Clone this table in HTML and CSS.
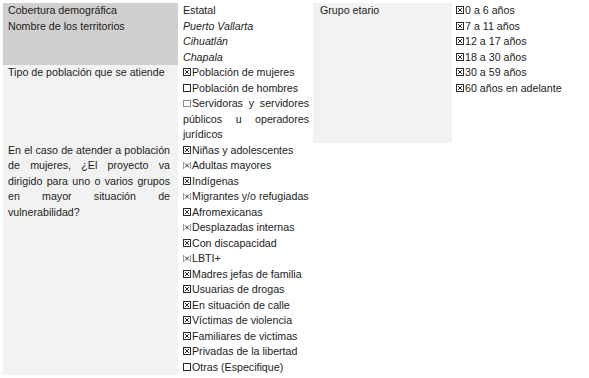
FILE: index.html
```html
<!DOCTYPE html>
<html lang="es">
<head>
<meta charset="utf-8">
<title>Cobertura demográfica</title>
<link rel="stylesheet" href="styles.css">
</head>
<body>
<svg width="0" height="0" class="defs">
  <defs>
    <symbol id="chk" viewBox="0 0 9 9">
      <rect x="0.5" y="0.5" width="7" height="7" fill="none" stroke="#2a2a2a" stroke-width="1"/>
      <path d="M2 2 L6 6 M6 2 L2 6" stroke="#2a2a2a" stroke-width="1" fill="none"/>
    </symbol>
    <symbol id="chkn" viewBox="0 0 9 9">
      <path d="M0.5 1 V8 M7.5 1 V8" stroke="#9a9a9a" stroke-width="1" fill="none"/>
      <path d="M2 2.5 L6 6.5 M6 2.5 L2 6.5" stroke="#2a2a2a" stroke-width="1" fill="none"/>
    </symbol>
    <symbol id="unc" viewBox="0 0 9 9">
      <rect x="0.5" y="0.5" width="7" height="7" fill="none" stroke="#2a2a2a" stroke-width="1"/>
    </symbol>
    <symbol id="uncl" viewBox="0 0 9 9">
      <rect x="0.5" y="1.5" width="7" height="6" fill="none" stroke="#8a8a8a" stroke-width="1"/>
    </symbol>
  </defs>
</svg>
<div class="sheet">
  <div class="cell c1 dark r1">
    <div>Cobertura demográfica</div>
    <div>Nombre de los territorios</div>
  </div>
  <div class="cell c2 r1">
    <div>Estatal</div>
    <div class="it">Puerto Vallarta</div>
    <div class="it">Cihuatlán</div>
    <div class="it">Chapala</div>
  </div>
  <div class="cell c3 light span">
    <div>Grupo etario</div>
  </div>
  <div class="cell c4 span">
    <div><svg class="cb"><use href="#chk"/></svg>0 a 6 años</div>
    <div><svg class="cb"><use href="#chk"/></svg>7 a 11 años</div>
    <div><svg class="cb"><use href="#chk"/></svg>12 a 17 años</div>
    <div><svg class="cb"><use href="#chk"/></svg>18 a 30 años</div>
    <div><svg class="cb"><use href="#chk"/></svg>30 a 59 años</div>
    <div><svg class="cb"><use href="#chk"/></svg>60 años en adelante</div>
  </div>

  <div class="cell c1 light r2">
    <div>Tipo de población que se atiende</div>
  </div>
  <div class="cell c2 r2">
    <div><svg class="cb"><use href="#chk"/></svg>Población de mujeres</div>
    <div><svg class="cb"><use href="#unc"/></svg>Población de hombres</div>
    <p class="just"><svg class="cb"><use href="#uncl"/></svg>Servidoras y servidores públicos u operadores jurídicos</p>
  </div>

  <div class="cell c1 light r3">
    <p class="just">En el caso de atender a población de mujeres, ¿El proyecto va dirigido para uno o varios grupos en mayor situación de vulnerabilidad?</p>
  </div>
  <div class="cell c2 r3">
    <div><svg class="cb"><use href="#chk"/></svg>Niñas y adolescentes</div>
    <div><svg class="cb"><use href="#chkn"/></svg>Adultas mayores</div>
    <div><svg class="cb"><use href="#chk"/></svg>Indígenas</div>
    <div><svg class="cb"><use href="#chkn"/></svg>Migrantes y/o refugiadas</div>
    <div><svg class="cb"><use href="#chk"/></svg>Afromexicanas</div>
    <div><svg class="cb"><use href="#chkn"/></svg>Desplazadas internas</div>
    <div><svg class="cb"><use href="#chk"/></svg>Con discapacidad</div>
    <div><svg class="cb"><use href="#chkn"/></svg>LBTI+</div>
    <div><svg class="cb"><use href="#chk"/></svg>Madres jefas de familia</div>
    <div><svg class="cb"><use href="#chk"/></svg>Usuarias de drogas</div>
    <div><svg class="cb"><use href="#chk"/></svg>En situación de calle</div>
    <div><svg class="cb"><use href="#chk"/></svg>Víctimas de violencia</div>
    <div><svg class="cb"><use href="#chk"/></svg>Familiares de victimas</div>
    <div><svg class="cb"><use href="#chk"/></svg>Privadas de la libertad</div>
    <div><svg class="cb"><use href="#unc"/></svg>Otras (Especifique)</div>
  </div>
</div>
</body>
</html>
```
FILE: styles.css
```css
html, body {
  margin: 0;
  padding: 0;
  background: #ffffff;
}

body {
  font-family: "Liberation Sans", Arial, sans-serif;
  font-size: 10.67px;
  line-height: 15.5px;
  color: #1c1c1c;
}

.defs {
  position: absolute;
  width: 0;
  height: 0;
}

.sheet {
  display: grid;
  grid-template-columns: 175px 135px 139px 1fr;
  grid-template-rows: auto auto auto;
  padding: 3px 0 0 3px;
}

.cell p {
  margin: 0;
}

.c1 {
  grid-column: 1;
  padding: 0 8px 0 5px;
}

.c2 {
  grid-column: 2;
  padding: 0 4px 0 5px;
}

.c3 {
  grid-column: 3;
  padding: 0 4px 0 7px;
}

.c4 {
  grid-column: 4;
  padding: 0 4px 0 4px;
}

.r1 { grid-row: 1; }
.r2 { grid-row: 2; }
.r3 { grid-row: 3; }
.span { grid-row: 1 / 3; }

.dark {
  background: #d0cece;
}

.light {
  background: #f2f2f2;
}

.it {
  font-style: italic;
}

.just {
  text-align: justify;
}

.cb {
  width: 9px;
  height: 9px;
  vertical-align: -1px;
}
```
